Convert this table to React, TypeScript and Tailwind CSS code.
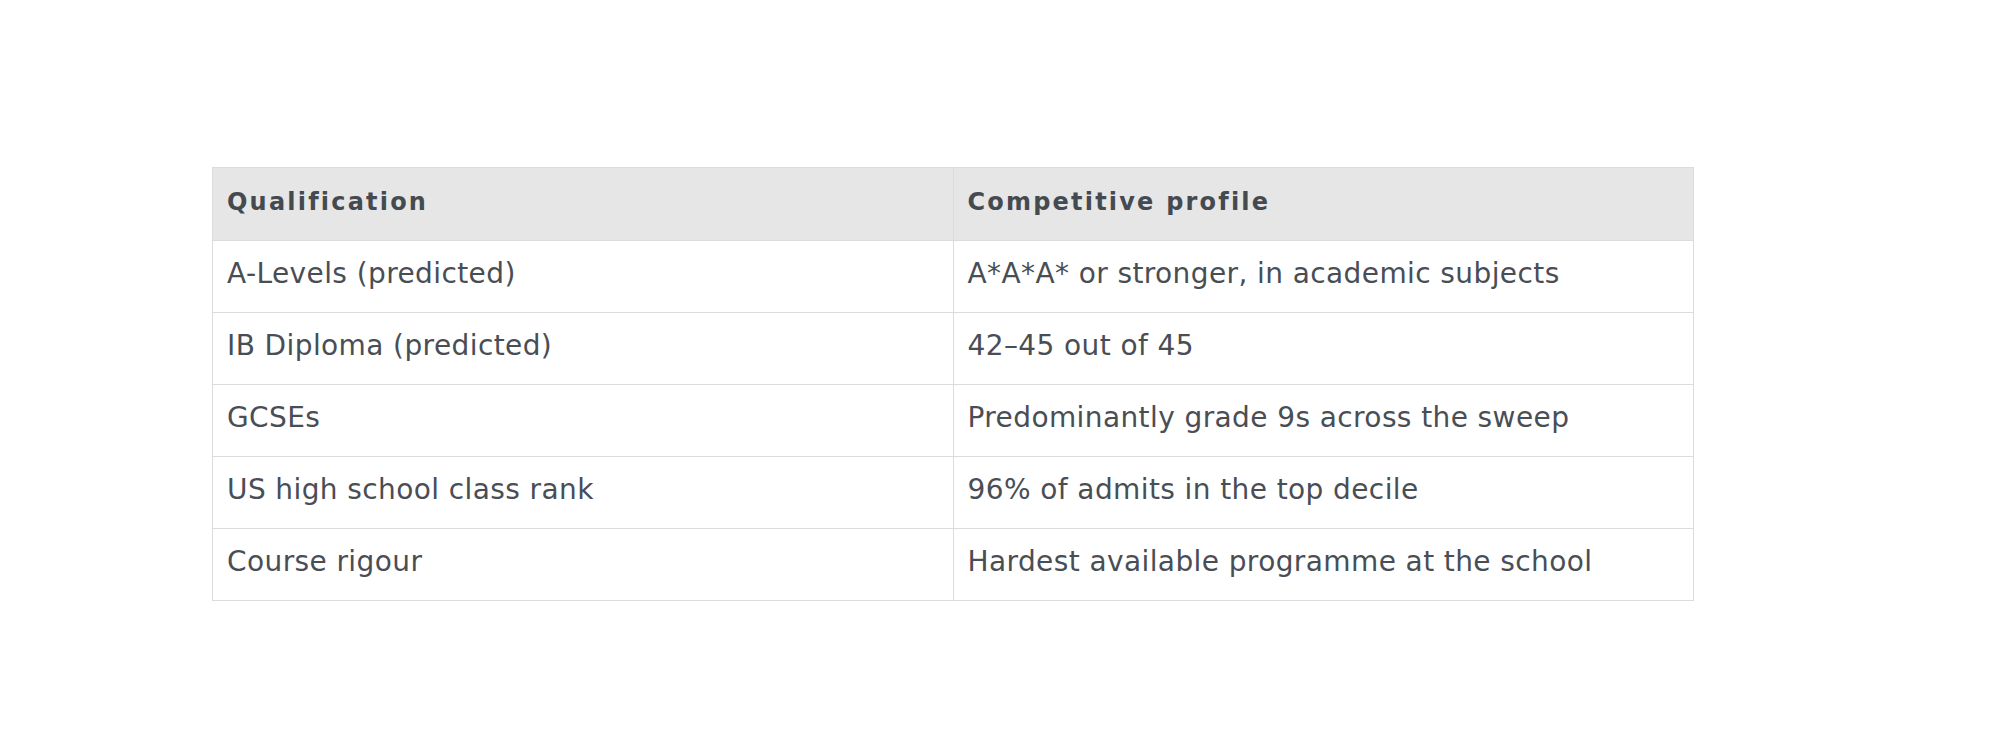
const rows: [string, string][] = [
  ["A-Levels (predicted)", "A*A*A* or stronger, in academic subjects"],
  ["IB Diploma (predicted)", "42–45 out of 45"],
  ["GCSEs", "Predominantly grade 9s across the sweep"],
  ["US high school class rank", "96% of admits in the top decile"],
  ["Course rigour", "Hardest available programme at the school"],
];

export default function App() {
  return (
    <div className="min-h-[745px] bg-white pl-[212px] pt-[167px] font-['DejaVu_Sans',sans-serif] text-[#494e55]">
      <table className="w-[1482px] table-fixed border-collapse border border-[#dcdcdc]">
        <thead>
          <tr className="h-[73px] bg-[#e6e6e6]">
            <th className="border border-[#dcdcdc] pb-[5px] pl-[14px] pr-[15px] text-left text-[24px] font-bold tracking-[2.2px] text-[#454a51]">
              Qualification
            </th>
            <th className="border border-[#dcdcdc] pb-[5px] pl-[14px] pr-[15px] text-left text-[24px] font-bold tracking-[2.2px] text-[#454a51]">
              Competitive profile
            </th>
          </tr>
        </thead>
        <tbody>
          {rows.map(([q, p]) => (
            <tr key={q} className="h-[72px]">
              <td className="border border-[#dcdcdc] pb-[5px] pl-[14px] pr-[15px] text-[28px] tracking-[0.4px]">{q}</td>
              <td className="border border-[#dcdcdc] pb-[5px] pl-[14px] pr-[15px] text-[28px] tracking-[0.4px]">{p}</td>
            </tr>
          ))}
        </tbody>
      </table>
    </div>
  );
}
